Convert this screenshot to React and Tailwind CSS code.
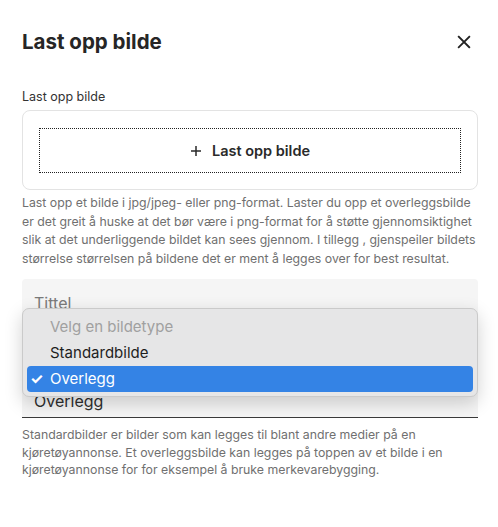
import React from 'react';

function CloseIcon({ className }) {
  return (
    <svg className={className} viewBox="0 0 24 24" fill="none" stroke="currentColor" strokeWidth="2.4" strokeLinecap="square">
      <path d="M5 5l14 14M19 5L5 19" />
    </svg>
  );
}

function PlusIcon({ className }) {
  return (
    <svg className={className} viewBox="0 0 24 24" fill="none" stroke="currentColor" strokeWidth="3">
      <path d="M12 2v20M2 12h20" />
    </svg>
  );
}

export default function App() {
  const options = [
    { label: 'Velg en bildetype', disabled: true },
    { label: 'Standardbilde' },
    { label: 'Overlegg', selected: true },
  ];

  return (
    <div className="min-h-[527px] bg-white pl-[22px] pr-[20px] pt-[28px] text-[#2a2a2a]" style={{ fontFamily: 'Inter, "Noto Sans", sans-serif' }}>
      {/* Header */}
      <div className="flex items-center justify-between">
        <h2 className="text-[20.5px] leading-[28px] font-bold text-[#262626]">Last opp bilde</h2>
        <button className="mr-[5px] text-[#222]" title="Lukk">
          <CloseIcon className="w-[18px] h-[18px]" />
        </button>
      </div>

      {/* Upload */}
      <div className="mt-[32px] text-[12.5px] leading-[18px] text-[#333]">Last opp bilde</div>
      <div className="mt-[4px] h-[80px] rounded-[8px] border border-[#e3e3e3] px-[16px] pt-[17px] pb-[16px]">
        <div className="h-full border border-dotted border-[#222] flex items-center justify-center gap-[10px] font-semibold text-[14.5px] text-[#2a2a2a]">
          <PlusIcon className="w-[12px] h-[12px]" />
          <span>Last opp bilde</span>
        </div>
      </div>
      <p className="mt-[4px] text-[12.3px] leading-[18.5px] text-[#707070]">
        Last opp et bilde i jpg/jpeg- eller png-format. Laster du opp et overleggsbilde er det greit å huske at det bør være i png-format for å støtte gjennomsiktighet slik at det underliggende bildet kan sees gjennom. I tillegg , gjenspeiler bildets størrelse størrelsen på bildene det er ment å legges over for best resultat.
      </p>

      {/* Fields */}
      <div className="relative mt-[11px] h-[139px] rounded-t-[4px] bg-[#f5f5f5] border-b border-[#3a3a3a]">
        <div className="absolute left-[12px] top-[14px] text-[16px] leading-[20px] text-[#7a7a7a]">Tittel</div>
        <div className="absolute left-[12px] top-[112px] text-[16px] leading-[20px] text-[#2f2f2f]">Overlegg</div>

        {/* Open select menu */}
        <div className="absolute left-0 right-0 top-[29px] h-[89px] rounded-[7px] border border-[#cacaca] bg-[#e6e6e7] px-[4px] pt-[5px] pb-[4px] shadow-[0_6px_18px_rgba(0,0,0,0.18)]">
          {options.map((o) => (
            <div
              key={o.label}
              className={
                'flex items-center h-[26px] rounded-[4px] pl-[23px] text-[15px] ' +
                (o.selected ? 'bg-[#3483e5] text-white' : o.disabled ? 'text-[#a0a0a0]' : 'text-[#1e1e1e]')
              }
            >
              {o.selected && <span className="-ml-[20px] w-[20px] text-[15px] font-bold">✓</span>}
              {o.label}
            </div>
          ))}
        </div>
      </div>
      <p className="mt-[8px] text-[12.3px] leading-[17.5px] text-[#707070]">
        Standardbilder er bilder som kan legges til blant andre medier på en kjøretøyannonse. Et overleggsbilde kan legges på toppen av et bilde i en kjøretøyannonse for for eksempel å bruke merkevarebygging.
      </p>
    </div>
  );
}
